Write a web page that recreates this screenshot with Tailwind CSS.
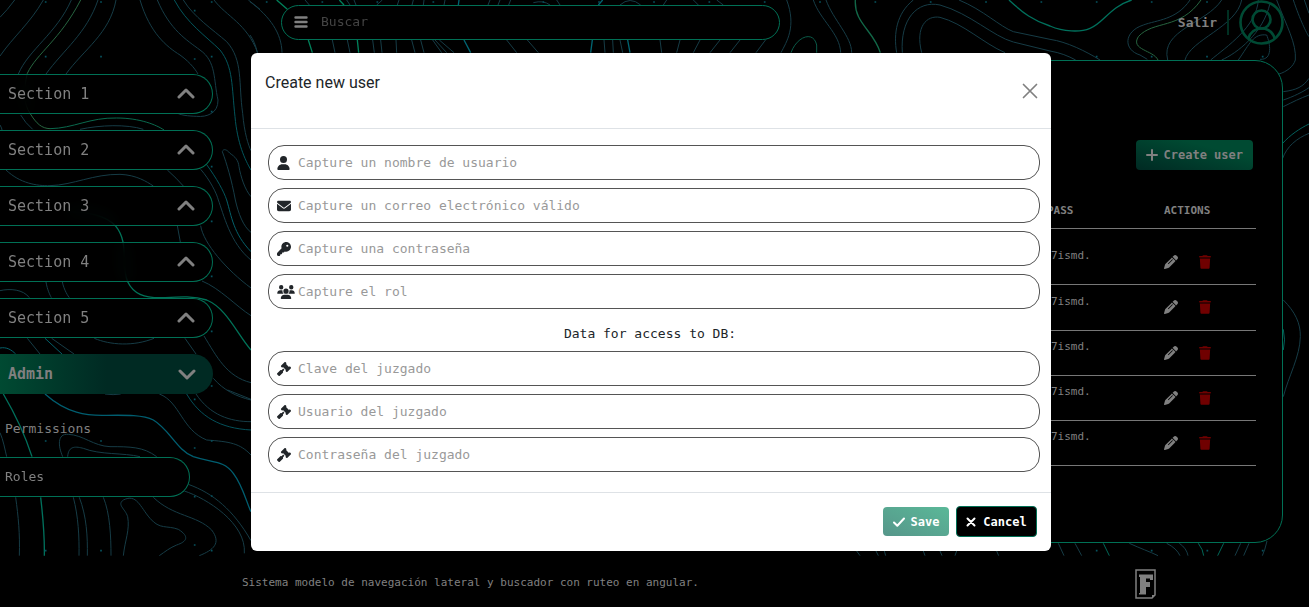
<!DOCTYPE html>
<html lang="es">
<head>
<meta charset="utf-8">
<meta name="viewport" content="width=device-width, initial-scale=1">
<title>Create new user</title>
<script src="https://cdn.jsdelivr.net/npm/@tailwindcss/browser@4"></script>
</head>
<body class="bg-black font-['DejaVu_Sans_Mono',monospace] text-[13px] text-[#808080]">

<!-- Shared icon shapes -->
<svg class="hidden" aria-hidden="true">
  <symbol id="up" viewBox="0 0 18 12"><path d="M2 9 9 2l7 7" fill="none" stroke="currentColor" stroke-width="3" stroke-linecap="round" stroke-linejoin="round"/></symbol>
  <symbol id="gavel" viewBox="0 0 512 512"><path fill="currentColor" d="M318.600 9.400c-12.500-12.500-32.800-12.500-45.300 0l-120 120c-12.500 12.500-12.500 32.800 0 45.300l16 16c12.500 12.500 32.800 12.500 45.300 0l4-4L325.400 293.400l-4 4c-12.500 12.500-12.500 32.800 0 45.300l16 16c12.500 12.500 32.800 12.500 45.300 0l120-120c12.500-12.500 12.500-32.800 0-45.300l-16-16c-12.500-12.500-32.800-12.500-45.300 0l-4 4L330.600 74.600l4-4c12.500-12.500 12.500-32.800 0-45.300l-16-16zm-152 288c-12.500-12.500-32.800-12.500-45.300 0l-112 112c-12.500 12.500-12.500 32.800 0 45.300l48 48c12.500 12.500 32.800 12.500 45.300 0l112-112c12.500-12.500 12.500-32.800 0-45.300l-1.400-1.400L272 285.300 226.700 240 168 298.700l-1.400-1.400z"/></symbol>
  <symbol id="trash" viewBox="0 0 448 512"><path fill="currentColor" d="M135.200 17.700L128 32 32 32C14.300 32 0 46.300 0 64S14.300 84 32 84l384 0c17.700 0 32-2.300 32-20s-14.300-32-32-32l-96 0-7.200-14.300C307.400 6.800 296.300 0 284.200 0L163.800 0c-12.100 0-23.200 6.800-28.600 17.700zM416 128L32 128 53.200 467c1.600 25.300 22.600 45 47.900 45l245.800 0c25.300 0 46.300-19.700 47.900-45L416 128z"/></symbol>
  <symbol id="pencil" viewBox="0 0 512 512"><path fill="currentColor" d="M410.300 231l11.300-11.300-33.900-33.900-62.100-62.100L291.700 89.800l-11.300 11.300-22.600 22.600L58.600 322.900c-10.400 10.400-18 23.300-22.200 37.400L1 480.700c-2.500 8.400-.2 17.500 6.100 23.700s15.300 8.500 23.700 6.100l120.300-35.400c14.100-4.200 27-11.800 37.400-22.200L387.700 253.700 410.300 231zM362.700 18.700L348.300 33.200 325.700 55.800 314.300 67.100l33.900 33.900 62.100 62.100 33.900 33.900 11.300-11.300 22.600-22.600 14.500-14.500c25-25 25-65.500 0-90.500L453.300 18.700c-25-25-65.500-25-90.500 0zm-47.400 168l-144 144c-6.200 6.200-16.400 6.200-22.600 0s-6.200-16.400 0-22.600l144-144c6.200-6.200 16.400-6.200 22.600 0s6.200 16.400 0 22.600z"/></symbol>
</svg>

<div class="relative isolate flex min-h-screen flex-col overflow-hidden">

  <!-- Topographic backdrop -->
  <svg class="absolute top-0 left-0 -z-10 h-[607px] w-[1309px]" viewBox="0 0 3927 1821" fill="none" stroke="#163c46" stroke-width="3" aria-hidden="true">
    <g>
      <path d="M0 52Q22 30 44 0M0 168C40 110 90 70 130 0M55 222C85 150 170 100 214 0M138 222C190 150 260 100 294 0M198 222C250 150 330 100 348 0M420 0C450 100 500 140 540 165C575 190 590 215 594 222M472 0C510 90 560 120 600 150C650 185 640 240 654 300C655 340 620 352 590 349C560 348 545 345 535 341M550 0C580 50 640 90 680 125C730 180 715 250 728 340C733 400 745 435 753 452M642 0C680 50 740 70 773 158M745 0L780 28M667 455C670 445 680 448 690 460C705 470 715 480 717 500C722 530 735 570 753 590M667 455C680 490 695 540 706 600M240 388C300 375 380 372 430 388M18 510C60 550 110 558 150 557C220 555 280 522 360 523C410 525 440 545 460 558M502 510Q530 535 550 558M62 345Q75 368 98 388M0 375Q6 385 6 390M602 508C630 540 650 580 655 600"/>
      <path stroke="#276540" d="M242 0C180 120 110 160 82 220C70 270 70 310 90 340C110 372 125 385 150 386"/>
      <path stroke="#0a6a4e" d="M150 386C220 385 270 352 350 354C420 354 470 375 492 390"/>
      <path stroke="#03565c" d="M523 0C560 70 620 110 660 150C700 200 695 260 705 350C712 430 735 480 753 510M620 494C650 535 672 575 680 600"/>
    </g>
    <g transform="translate(0 600)">
      <path d="M532 77L541 126M602 77C610 130 680 210 753 264M655 0C670 40 690 130 753 180M706 0C715 40 730 80 753 97M606 243C660 265 710 320 753 347M0 272C30 265 70 268 88 293M138 246C142 270 150 285 154 293M187 246C192 270 205 290 208 293M82 415L120 462M155 415L222 462M283 415C330 435 400 440 462 415M555 415L588 462M612 408C650 470 680 530 753 548M640 535C670 570 710 590 753 600"/>
      <path stroke="#04606a" d="M680 0C695 50 700 100 753 155M135 415L186 462M0 444C20 440 35 450 47 462"/>
      <path stroke="#007258" stroke-width="4" d="M200 35C270 35 320 50 346 77C390 130 360 190 383 245C400 280 430 295 490 293C540 290 580 287 620 300C680 325 710 400 753 450"/>
    </g>
    <g transform="translate(0 1170)">
      <path d="M0 128C10 150 15 180 20 200M47 322C55 380 60 430 58 497M188 200C175 170 170 130 205 133C250 135 280 168 330 170C390 170 430 170 470 200M203 200C205 165 230 170 250 175C300 195 370 188 420 200M220 322C235 380 238 440 237 497M238 322C260 380 263 440 262 497M310 322C330 370 333 440 333 497M370 497C375 450 390 420 383 380C375 355 350 345 370 330C410 310 420 350 450 385C480 420 500 405 535 418C570 440 560 455 530 465C510 473 495 485 478 497M460 322C520 380 590 375 635 420C665 460 640 480 598 497M565 283C640 310 700 360 753 452M553 303C620 325 740 400 733 490M478 12C540 35 545 120 620 150C690 155 720 160 753 195M588 12C630 75 690 95 753 95M683 0L753 28M315 12Q340 16 362 12"/>
      <path stroke="#04505a" d="M560 12C600 80 660 115 753 120"/>
      <path stroke="#00705c" stroke-width="4" d="M10 12C50 80 80 150 96 200M122 322C130 390 134 440 133 497"/>
      <path stroke="#005e70" stroke-width="4" d="M135 12C200 70 260 78 320 76C380 75 430 75 460 90C510 120 530 180 580 200C640 220 670 210 700 250C730 290 740 340 753 365"/>
    </g>
    <g transform="translate(750 0)">
      <path d="M0 5C60 50 95 100 96 158M0 105Q15 125 22 158M165 0L178 15M247 120L255 158M292 120L300 158M368 120L373 158M392 120L396 158M438 120L440 158M485 120L495 158M512 120L522 158M548 120L575 158M555 120L590 158M568 120L612 158M770 120L800 158M832 120L865 158M1062 120L1065 158M1088 120L1090 158M1110 120L1118 158M290 0L300 15M312 0L318 15M397 0L380 15M447 0L442 15M490 0L486 15M522 0L520 15M585 0L582 15M720 0L714 15M750 0L744 15M782 0L776 15M850 8Q880 0 900 15M920 0L930 15M1110 15Q1140 -12 1172 15M1230 120L1235 158M1290 120L1280 158M1350 120L1330 158M1410 120L1380 158M1470 120L1440 158M1250 0L1240 15M1330 0L1345 15M1400 0L1420 15"/>
      <path stroke="#00805a" stroke-width="4" d="M80 0L112 28M175 120L187 158M322 120L326 158M268 0L282 15"/>
      <path stroke="#006472" stroke-width="4" d="M642 120L662 158M627 0L625 15M1027 120L1022 158M1133 120L1140 158M1058 0L1045 15"/>
    </g>
    <g transform="translate(2250 0)">
      <path d="M48 118L18 158M110 0C140 80 110 125 93 158M190 0C210 60 270 100 272 158M228 0C250 60 305 110 305 158M490 0C440 40 430 100 440 158M457 158C450 60 500 0 570 15C660 40 730 110 790 126L900 153M515 158C495 80 530 45 570 52C640 70 700 130 765 158M627 0C700 30 750 80 790 95L900 118"/>
      <path stroke="#0a5a48" d="M123 158C140 110 190 90 200 135L200 158"/>
      <path stroke="#126848" stroke-width="4" d="M316 0C312 70 370 90 391 158"/>
      <path stroke="#00705c" stroke-width="4" d="M777 0C820 40 850 62 900 78C940 95 990 98 1020 85C1060 70 1080 20 1145 0"/>
    </g>
    <g transform="translate(3120 0)">
      <path d="M30 118C80 125 140 155 180 180M30 153C60 158 85 168 107 180M450 0C410 60 350 60 310 75C250 95 250 150 300 165L322 178M545 0C500 70 360 90 383 180M605 0C590 80 450 120 435 180M655 0C650 80 560 140 512 180M690 10C670 100 590 160 545 180M595 180C630 130 640 100 680 105C690 130 700 180 660 178M710 0C740 80 770 130 766 180C760 200 740 215 717 222M760 0C780 60 800 100 807 110M793 0L807 40M730 275C770 270 790 260 807 235M730 300C760 290 790 275 807 263M730 320C760 305 780 295 807 285M728 475C740 440 770 415 807 400M730 900C765 935 782 970 781 1010C780 1070 745 1130 730 1190"/>
      <path stroke="#276540" d="M483 0C420 90 340 60 295 110C270 150 340 150 354 180"/>
      <path stroke="#04605c" d="M728 430C750 405 780 385 807 372M730 988Q737 1020 730 1050"/>
    </g>
    <g transform="translate(3120 1320)">
      <path d="M55 310L72 347M105 310L125 347M268 310C300 325 330 335 354 347M380 310Q410 325 420 347M418 310Q440 325 444 347M602 310L585 347M627 310L611 347M681 303Q675 330 667 347M-550 333L-540 347M-492 333L-485 347M-467 333L-463 347M-350 333L-345 347M-300 333L-294 347M-250 333L-255 347M-130 333L-124 347"/>
      <path stroke="#006858" d="M190 310L208 347M475 310Q490 330 491 347M551 310L533 347"/>
    </g>
    <g stroke="#06525e" stroke-width="5" stroke-linecap="square">
      <path d="M137 6h.1M303 6h.1M635 6h.1M584 32h.1M137 170h.1M303 170h.1M584 177h.1M635 170h.1M635 335h.1M635 500h.1M635 664h.1M635 829h.1M635 994h.1M635 1158h.1M137 1323h.1M303 1323h.1M584 1198h.1M584 1344h.1M635 1323h.1M635 1488h.1M584 1490h.1M137 1652h.1M303 1652h.1M584 1635h.1M635 1652h.1"/>
      <path d="M800 6h.1M967 6h.1M1132 6h.1M1300 6h.1M1630 6h.1M1797 6h.1M1962 6h.1M2128 6h.1M2294 6h.1M2460 6h.1M2626 6h.1M2792 6h.1M2958 6h.1M3124 6h.1M3290 6h.1M3455 6h.1M3621 6h.1M3290 170h.1M3455 170h.1M3621 170h.1M3788 170h.1M3290 1652h.1M3455 1652h.1M3622 1652h.1M3788 1652h.1"/>
    </g>
  </svg>

  <!-- Top bar -->
  <header class="flex h-[60px] items-start justify-between pr-[25px] pl-[281px]">
    <form class="mt-[5px] flex h-[35px] w-[499px] items-center gap-[13px] rounded-full border border-[#007055] bg-black/70 px-3 pb-0.5 backdrop-blur-md">
      <svg class="h-3 w-[14px] shrink-0" viewBox="0 0 14 12" stroke="#808080" stroke-width="2.400" stroke-linecap="round" aria-hidden="true"><path d="M1.500 1.500h11M1.500 6h11M1.500 10.500h11"/></svg>
      <input type="search" aria-label="Buscar" placeholder="Buscar" class="min-w-0 flex-1 bg-transparent outline-none placeholder:text-[#444]">
    </form>
    <div class="flex h-[45px] items-center">
      <a href="#" class="font-bold">Salir</a>
      <span class="mx-[10px] h-[25px] w-0.5 bg-[#003022]"></span>
      <svg class="size-[45px]" viewBox="0 0 45 45" fill="none" stroke="#004a34" stroke-width="2.600" role="img" aria-label="Perfil"><circle cx="22.500" cy="22.500" r="21"/><circle cx="22.500" cy="19.500" r="9"/><path d="M9 39C11.500 31.500 16.500 28.500 22.500 28.500S33.500 31.500 36 39"/></svg>
    </div>
  </header>

  <div class="flex flex-1">
    <!-- Side navigation -->
    <nav class="flex w-[213px] shrink-0 flex-col gap-4 pt-[14px] text-[15px]">
      <button class="flex h-10 items-center justify-between rounded-r-full border border-l-0 border-[#007055] bg-black/60 pr-[17px] pl-2 backdrop-blur-sm">Section 1<svg class="h-3 w-[18px]"><use href="#up"/></svg></button>
      <button class="flex h-10 items-center justify-between rounded-r-full border border-l-0 border-[#007055] bg-black/60 pr-[17px] pl-2 backdrop-blur-sm">Section 2<svg class="h-3 w-[18px]"><use href="#up"/></svg></button>
      <button class="flex h-10 items-center justify-between rounded-r-full border border-l-0 border-[#007055] bg-black/60 pr-[17px] pl-2 backdrop-blur-sm">Section 3<svg class="h-3 w-[18px]"><use href="#up"/></svg></button>
      <button class="flex h-10 items-center justify-between rounded-r-full border border-l-0 border-[#007055] bg-black/60 pr-[17px] pl-2 backdrop-blur-sm">Section 4<svg class="h-3 w-[18px]"><use href="#up"/></svg></button>
      <button class="flex h-10 items-center justify-between rounded-r-full border border-l-0 border-[#007055] bg-black/60 pr-[17px] pl-2 backdrop-blur-sm">Section 5<svg class="h-3 w-[18px]"><use href="#up"/></svg></button>
      <div class="flex flex-col gap-[15px]">
        <button class="flex h-10 items-center justify-between rounded-r-full bg-linear-to-r from-[#004a32] to-[#002a23] to-50% pr-[17px] pl-2 font-bold">Admin<svg class="h-3 w-[18px] rotate-180"><use href="#up"/></svg></button>
        <div class="flex w-[190px] flex-col gap-2 text-[13px]">
          <a href="#" class="flex h-10 items-center pl-[5px]">Permissions</a>
          <a href="#" class="flex h-10 items-center rounded-r-full border border-l-0 border-[#007055] bg-black/60 pl-[5px] backdrop-blur-sm">Roles</a>
        </div>
      </div>
    </nav>

    <!-- Users card -->
    <main class="mr-[26px] mb-[13px] ml-14 flex flex-1 flex-col rounded-[28px] border border-[#007055] bg-black px-[26px] pt-[79px] text-[11px]">
      <button class="mr-[3px] flex h-[30px] items-center gap-[6px] self-end rounded-[4px] bg-linear-to-tr from-[#002a23] to-[#004a32] to-70% px-[10px] text-xs font-bold">
        <svg class="size-3" viewBox="0 0 12 12" stroke="currentColor" stroke-width="2" stroke-linecap="round" aria-hidden="true"><path d="M6 1v10M1 6h10"/></svg>Create user</button>
      <table class="mt-6 w-full table-fixed text-left">
        <thead><tr class="h-[34px] border-b border-[#777]"><td></td><th class="w-[117px]">PASS</th><th class="w-[92px]">ACTIONS</th></tr></thead>
        <tbody>
          <tr class="h-14 border-b border-[#777]"><td></td><td class="pl-1">7ismd.</td><td><div class="flex gap-[21px] pt-[11px]"><button aria-label="Editar"><svg class="size-[14px]"><use href="#pencil"/></svg></button><button aria-label="Eliminar" class="text-[#700000]"><svg class="h-[14px] w-3"><use href="#trash"/></svg></button></div></td></tr>
          <tr class="h-[46px] border-b border-[#777]"><td></td><td class="pb-[10px] pl-1">7ismd.</td><td><div class="flex gap-[21px]"><button aria-label="Editar"><svg class="size-[14px]"><use href="#pencil"/></svg></button><button aria-label="Eliminar" class="text-[#700000]"><svg class="h-[14px] w-3"><use href="#trash"/></svg></button></div></td></tr>
          <tr class="h-[45px] border-b border-[#777]"><td></td><td class="pb-[10px] pl-1">7ismd.</td><td><div class="flex gap-[21px]"><button aria-label="Editar"><svg class="size-[14px]"><use href="#pencil"/></svg></button><button aria-label="Eliminar" class="text-[#700000]"><svg class="h-[14px] w-3"><use href="#trash"/></svg></button></div></td></tr>
          <tr class="h-[45px] border-b border-[#777]"><td></td><td class="pb-[10px] pl-1">7ismd.</td><td><div class="flex gap-[21px]"><button aria-label="Editar"><svg class="size-[14px]"><use href="#pencil"/></svg></button><button aria-label="Eliminar" class="text-[#700000]"><svg class="h-[14px] w-3"><use href="#trash"/></svg></button></div></td></tr>
          <tr class="h-[45px] border-b border-[#777]"><td></td><td class="pb-[10px] pl-1">7ismd.</td><td><div class="flex gap-[21px]"><button aria-label="Editar"><svg class="size-[14px]"><use href="#pencil"/></svg></button><button aria-label="Eliminar" class="text-[#700000]"><svg class="h-[14px] w-3"><use href="#trash"/></svg></button></div></td></tr>
        </tbody>
      </table>
    </main>
  </div>

  <footer class="flex h-[51px] items-center justify-between bg-black pt-1 pr-[153px] pl-[242px] text-[11px]">
    <p>Sistema modelo de navegación lateral y buscador con ruteo en angular.</p>
    <svg class="h-[30px] w-[21px]" viewBox="0 0 21 30" role="img" aria-label="Logo"><path d="M1 1h19v25l-3 3H1z" fill="none" stroke="#808080" stroke-width="1.500"/><path d="M4 5.500h14V11h-3V9.500h-4V13h4v5h-4v7.500H4V24h1V8H4z" fill="#808080"/><path d="M17 29v-3h3z" fill="#808080"/></svg>
  </footer>
</div>

<!-- Create user dialog -->
<div class="fixed inset-0 flex items-start justify-center pt-[53px] pr-[7px]">
  <form role="dialog" aria-labelledby="title" class="w-full max-w-[800px] rounded-[6px] bg-white text-[#212529]">
    <div class="flex h-[76px] items-center justify-between border-b border-[#dee2e6] pr-[13px] pl-[14px]">
      <h1 id="title" class="pb-4 font-[Roboto,sans-serif] text-base">Create new user</h1>
      <button type="button" aria-label="Close"><svg class="size-4" viewBox="0 0 16 16" stroke="#808080" stroke-width="1.700" stroke-linecap="round"><path d="M1.500 1.500l13 13M14.500 1.500l-13 13"/></svg></button>
    </div>
    <div class="flex flex-col gap-2 pt-4 pr-[11px] pb-5 pl-[17px]">
      <label class="flex h-[35px] items-center gap-1 rounded-2xl border border-[#555] px-2"><span class="w-[17px] shrink-0"><svg class="h-[14px] w-[13px]" viewBox="0 0 448 512" fill="currentColor" aria-hidden="true"><path d="M224 256A128 128 0 1 0 224 0a128 128 0 1 0 0 256zm-45.700 48C79.800 304 0 383.800 0 482.300 0 498.700 13.300 512 29.700 512l388.600 0c16.400 0 29.700-13.300 29.700-29.700C448 383.800 368.200 304 269.700 304z"/></svg></span><input aria-label="Nombre de usuario" placeholder="Capture un nombre de usuario" class="min-w-0 flex-1 outline-none placeholder:text-[#999]"></label>
      <label class="flex h-[35px] items-center gap-1 rounded-2xl border border-[#555] px-2"><span class="w-[17px] shrink-0"><svg class="size-[14px]" viewBox="0 0 512 512" fill="currentColor" aria-hidden="true"><path d="M48 64C21.500 64 0 85.500 0 112c0 15.100 7.100 29.300 19.200 38.400L236.800 313.600c11.400 8.500 27 8.500 38.400 0L492.800 150.400c12.100-9.100 19.200-23.300 19.200-38.400c0-26.500-21.500-48-48-48L48 64zM0 176L0 384c0 35.300 28.700 64 64 64l384 0c35.300 0 64-28.700 64-64l0-208L294.400 339.200c-22.800 17.100-54 17.100-76.800 0L0 176z"/></svg></span><input type="email" aria-label="Correo electrónico" placeholder="Capture un correo electrónico válido" class="min-w-0 flex-1 outline-none placeholder:text-[#999]"></label>
      <label class="flex h-[35px] items-center gap-1 rounded-2xl border border-[#555] px-2"><span class="w-[17px] shrink-0"><svg class="size-[14px]" viewBox="0 0 512 512" fill="currentColor" aria-hidden="true"><path fill-rule="evenodd" d="M336 352c97.200 0 176-78.800 176-176S433.200 0 336 0S160 78.800 160 176c0 18.700 2.900 36.800 8.300 53.700L20 380C0 400 0 415 0 430l0 40c0 25 17 42 42 42l30 0c40 0 50-20 50-64l20 0c40 0 50-20 50-64l40 0c20 0 30-8 50-38c16.900 5.400 35 6 54 6zM376 96a40 40 0 1 1 0 80 40 40 0 1 1 0-80z"/></svg></span><input type="password" aria-label="Contraseña" placeholder="Capture una contraseña" class="min-w-0 flex-1 outline-none placeholder:text-[#999]"></label>
      <label class="flex h-[35px] items-center gap-1 rounded-2xl border border-[#555] px-2"><span class="w-[17px] shrink-0"><svg class="h-[14px] w-[18px] max-w-none" viewBox="0 0 640 512" fill="currentColor" aria-hidden="true"><path d="M144 0a80 80 0 1 1 0 160A80 80 0 1 1 144 0zM512 0a80 80 0 1 1 0 160A80 80 0 1 1 512 0zM0 298.700C0 239.800 47.800 192 106.700 192l42.700 0c15.900 0 31 3.500 44.600 9.700c-1.300 7.200-1.900 14.700-1.900 22.300c0 38.200 16.800 72.500 43.300 96L21.300 320C9.600 320 0 310.400 0 298.700zM404.700 320c26.600-23.500 43.300-57.800 43.300-96c0-7.600-.7-15-1.900-22.300c13.600-6.300 28.700-9.700 44.600-9.700l42.700 0C592.200 192 640 239.800 640 298.700c0 11.800-9.600 21.300-21.300 21.300zM224 224a96 96 0 1 1 192 0 96 96 0 1 1 -192 0zM128 485.300C128 411.700 187.700 352 261.300 352l117.300 0C452.300 352 512 411.700 512 485.300c0 14.700-11.900 26.700-26.700 26.700l-330.700 0c-14.700 0-26.700-11.900-26.700-26.700z"/></svg></span><input aria-label="Rol" placeholder="Capture el rol" class="min-w-0 flex-1 outline-none placeholder:text-[#999]"></label>
      <p class="flex h-[26px] items-end justify-center pr-2">Data for access to DB:</p>
      <label class="flex h-[35px] items-center gap-1 rounded-2xl border border-[#555] px-2"><span class="w-[17px] shrink-0"><svg class="size-[14px]" aria-hidden="true"><use href="#gavel"/></svg></span><input aria-label="Clave del juzgado" placeholder="Clave del juzgado" class="min-w-0 flex-1 outline-none placeholder:text-[#999]"></label>
      <label class="flex h-[35px] items-center gap-1 rounded-2xl border border-[#555] px-2"><span class="w-[17px] shrink-0"><svg class="size-[14px]" aria-hidden="true"><use href="#gavel"/></svg></span><input aria-label="Usuario del juzgado" placeholder="Usuario del juzgado" class="min-w-0 flex-1 outline-none placeholder:text-[#999]"></label>
      <label class="flex h-[35px] items-center gap-1 rounded-2xl border border-[#555] px-2"><span class="w-[17px] shrink-0"><svg class="size-[14px]" aria-hidden="true"><use href="#gavel"/></svg></span><input type="password" aria-label="Contraseña del juzgado" placeholder="Contraseña del juzgado" class="min-w-0 flex-1 outline-none placeholder:text-[#999]"></label>
    </div>
    <div class="flex h-[59px] items-center justify-end gap-[7px] border-t border-[#dee2e6] pr-[14px] pb-px text-xs font-bold text-white">
      <button type="submit" class="flex h-[29px] w-[66px] items-center justify-center gap-[6px] rounded-[4px] bg-linear-to-tr from-[#56968a] to-[#5ab898]"><svg class="h-[10px] w-3" viewBox="0 0 12 10" fill="none" stroke="currentColor" stroke-width="2" stroke-linecap="round" stroke-linejoin="round" aria-hidden="true"><path d="M1 5.500 4.300 8.800 11 1.500"/></svg>Save</button>
      <button type="button" class="flex h-[31px] w-[81px] items-center justify-center gap-[7px] rounded-[4px] border border-[#007055] bg-black"><svg class="size-[10px]" viewBox="0 0 10 10" stroke="currentColor" stroke-width="2" stroke-linecap="round" aria-hidden="true"><path d="M1.500 1.500l7 7M8.500 1.500l-7 7"/></svg>Cancel</button>
    </div>
  </form>
</div>
</body>
</html>
